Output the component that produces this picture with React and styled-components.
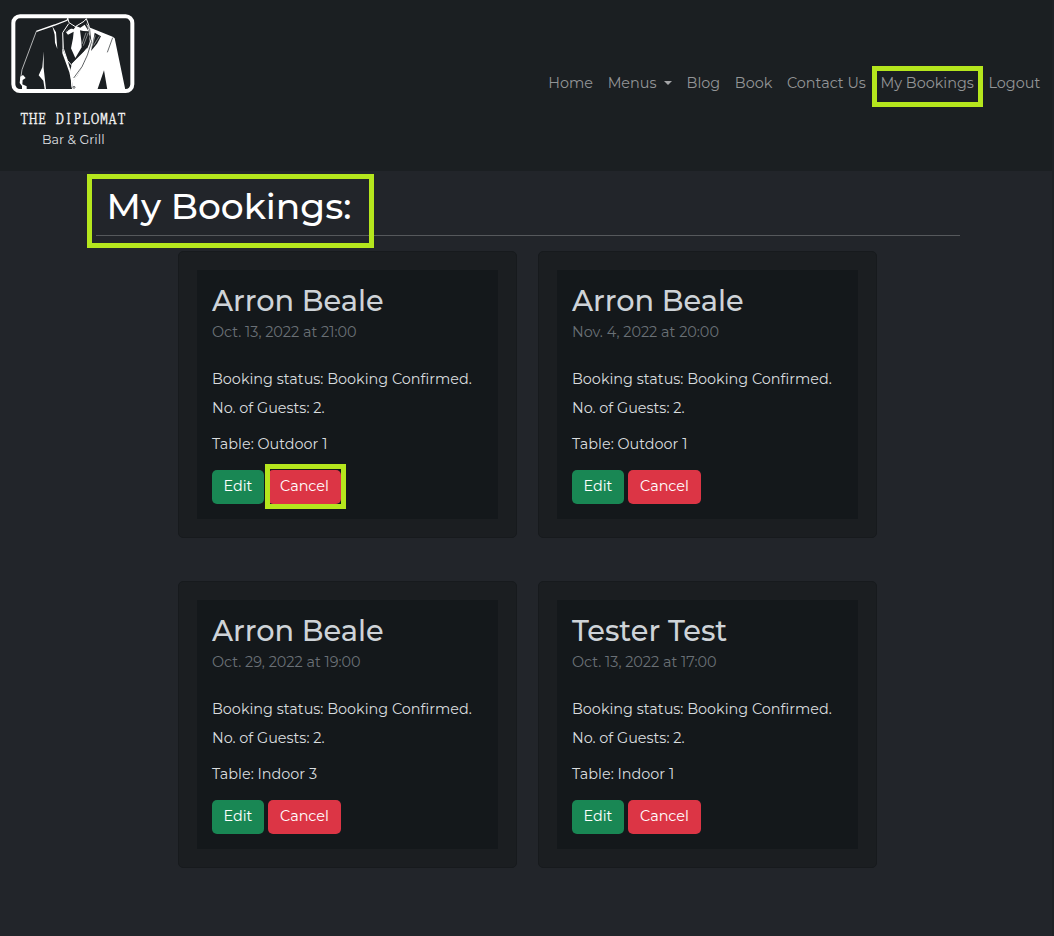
import React from "react";
import styled, { createGlobalStyle } from "styled-components";

const GlobalStyle = createGlobalStyle`
  * { box-sizing: border-box; }
  body {
    margin: 0;
    background: #22252a;
    color: #d9dcdf;
    font-family: Montserrat, Inter, sans-serif;
    font-size: 14.4px;
    line-height: 23px;
  }
  h1, h2, p { margin: 0; font-weight: 400; }
`;

const Page = styled.div`
  min-height: 936px;
  border-right: 2px solid #1e2125;
`;

const Header = styled.header`
  display: flex;
  justify-content: space-between;
  height: 171px;
  background: #1b1f22;
`;

const Brand = styled.a`
  display: block;
  width: 150px;
  height: 171px;
`;

const Nav = styled.nav`
  display: flex;
  align-items: flex-start;
  padding: 66px 4.4px 0 0;
`;

const NavLink = styled.a`
  position: relative;
  display: flex;
  align-items: center;
  height: 34px;
  padding: 0 7.33px;
  color: #939597;
  white-space: nowrap;
`;

const Caret = styled.span`
  margin-left: 7.4px;
  border: 4.3px solid transparent;
  border-top-color: #a4a5a7;
  border-bottom: 0;
`;

const Highlight = styled.span`
  position: absolute;
  top: ${(p) => p.$top}px;
  left: ${(p) => p.$left}px;
  width: ${(p) => p.$width}px;
  height: ${(p) => p.$height}px;
  border: 5px solid #b5e61d;
  pointer-events: none;
`;

const Main = styled.main`
  width: 864px;
  margin-left: 96px;
`;

const TitleBar = styled.div`
  position: relative;
  height: 65px;
  padding: 14px 0 0 10.5px;
  border-bottom: 1px solid #56595c;
`;

const Title = styled.h1`
  color: #fff;
  font-size: 36px;
  font-weight: 500;
  line-height: 43px;
  white-space: nowrap;
`;

const Grid = styled.section`
  display: grid;
  grid-template-columns: 339px 339px;
  gap: 43px 21px;
  padding: 15px 0 0 82px;
`;

const Card = styled.article`
  height: 287px;
  padding: 18px;
  border: 1px solid #171a1d;
  border-radius: 5px;
  background: #1b1e21;
`;

const CardBody = styled.div`
  height: 249px;
  padding: 15px;
  background: #14181b;
`;

const Guest = styled.h2`
  height: 36px;
  font-size: 28.8px;
  font-weight: 500;
  line-height: 32px;
  color: #ced3d8;
  white-space: nowrap;
`;

const When = styled.p`
  margin-bottom: 24px;
  color: #6a7076;
`;

const Line = styled.p`
  margin-bottom: ${(p) => p.$gap}px;
  white-space: nowrap;
`;

const Actions = styled.div`
  display: flex;
  gap: 4px;
`;

const Button = styled.button`
  position: relative;
  width: ${(p) => (p.$danger ? 73 : 52)}px;
  height: 34px;
  padding: 0 0 2px;
  border: 0;
  border-radius: 5px;
  background: ${(p) => (p.$danger ? "#dc3545" : "#198754")};
  color: #fff;
  font: inherit;
`;

const links = [
  { label: "Home" },
  { label: "Menus", caret: true },
  { label: "Blog" },
  { label: "Book" },
  { label: "Contact Us" },
  { label: "My Bookings", marked: true },
  { label: "Logout" },
];

const bookings = [
  { name: "Arron Beale", when: "Oct. 13, 2022 at 21:00", table: "Outdoor 1", marked: true },
  { name: "Arron Beale", when: "Nov. 4, 2022 at 20:00", table: "Outdoor 1" },
  { name: "Arron Beale", when: "Oct. 29, 2022 at 19:00", table: "Indoor 3" },
  { name: "Tester Test", when: "Oct. 13, 2022 at 17:00", table: "Indoor 1" },
];

function Logo() {
  return (
    <svg width="150" height="171" viewBox="0 0 450 513" role="img" aria-label="The Diplomat Bar and Grill">
      <g fill="#fff">
        <path d="M258 69L267 82L338 110L344 115L376 269H322L312 211L292 269H216L218 244L233 225L248 198L266 150L272 111Z" />
        <path d="M216 190L262 145L270 125L264 157L250 194L236 221L219 245L214 266L211 210Z" />
        <path d="M197 96L207 83L221 88L228 78L241 83L254 74L266 94L250 93L240 91L244 122L245 142L226 174L213 145L219 115L221 95L204 104Z" />
        <path d="M157 79L168 97L172 147L165 128L164 104ZM186 94L188 146L203 182L216 224L218 265L208 217L187 160ZM131 154V205L138 268H134L130 242L116 226L127 202ZM61 230L69 225L77 234L68 240L67 253L80 259V268H66V258L59 249Z" />
      </g>
      <g fill="none" stroke="#fff" strokeWidth="3">
        <path d="M62 236L66 209L109 94" strokeWidth="2" />
        <path d="M109 94L164 75L201 61L204 55" strokeWidth="4" />
        <path d="M203 54L207 68L226 80L252 64L259 56M206 71L188 98L190 145L202 181L216 197L242 170L261 145M259 56L267 78L271 126L258 181L219 263" />
      </g>
      <g fill="#1b1f22">
        <path d="M211 72L221 82L206 90L196 100Z" />
        <path d="M284 98L303 109L291 131L273 153L279 125Z" />
        <path d="M246 94L262 98L256 129L247 150Z" />
        <path d="M202 108L216 110L210 145L222 176L228 176L216 190L205 176L196 143Z" />
      </g>
      <g fill="none" stroke="#1b1f22" strokeWidth="2">
        <path d="M338 113L322 157M262 96L275 124L262 166L246 200L221 234M260 78L269 88L272 116M246 151L260 141" />
        <circle cx="222" cy="262" r="3" />
      </g>
      <path d="M258 98L246 132M265 98L250 137M286 106L274 145M298 109L281 136" fill="none" stroke="#babcbd" strokeWidth="2" />
      <rect x="40" y="49" width="357" height="224" rx="20" fill="none" stroke="#fff" strokeWidth="12" />
      <text
        transform="scale(.82 1)"
        y="371"
        x="89 121.3 153.7 186 218.3 250.6 282.9 315.2 347.6 379.9 412.2 444.5"
        textAnchor="middle"
        fill="#f3f3f3"
        stroke="#f3f3f3"
        strokeWidth="0.8"
        fontFamily="DejaVu Serif Condensed, DejaVu Serif, serif"
        fontSize="43"
      >
        THE DIPLO<tspan fontFamily="Liberation Mono, monospace" fontSize="48">M</tspan>AT
      </text>
      <text x="126" y="432" fill="#dedfe0" fontFamily="Montserrat, Inter, sans-serif" fontSize="38" fontWeight="400" textLength="188">
        Bar &amp; Grill
      </text>
    </svg>
  );
}

function BookingCard({ booking }) {
  return (
    <Card>
      <CardBody>
        <Guest>{booking.name}</Guest>
        <When>{booking.when}</When>
        <Line $gap={6}>Booking status: Booking Confirmed.</Line>
        <Line $gap={13}>No. of Guests: 2.</Line>
        <Line $gap={14}>Table: {booking.table}</Line>
        <Actions>
          <Button>Edit</Button>
          <Button $danger>
            Cancel
            {booking.marked && <Highlight $top={-6} $left={-3} $width={81} $height={45} />}
          </Button>
        </Actions>
      </CardBody>
    </Card>
  );
}

export default function App() {
  return (
    <Page>
      <GlobalStyle />
      <Header>
        <Brand><Logo /></Brand>
        <Nav>
          {links.map((l) => (
            <NavLink key={l.label}>
              {l.label}
              {l.caret && <Caret />}
              {l.marked && <Highlight $top={0} $left={-1.4} $width={111} $height={41} />}
            </NavLink>
          ))}
        </Nav>
      </Header>
      <Main>
        <TitleBar>
          <Title>My Bookings:</Title>
          <Highlight $top={3} $left={-9} $width={287} $height={74} />
        </TitleBar>
        <Grid>
          {bookings.map((b, i) => <BookingCard key={i} booking={b} />)}
        </Grid>
      </Main>
    </Page>
  );
}
